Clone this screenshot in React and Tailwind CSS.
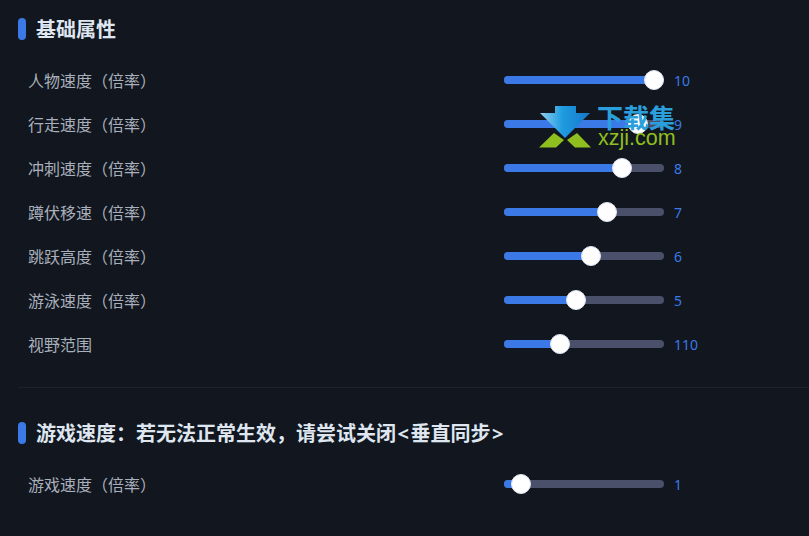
import React from 'react';

const basicRows = [
  { label: '人物速度（倍率）', value: 10, knob: 150 },
  { label: '行走速度（倍率）', value: 9, knob: 134 },
  { label: '冲刺速度（倍率）', value: 8, knob: 118 },
  { label: '蹲伏移速（倍率）', value: 7, knob: 103 },
  { label: '跳跃高度（倍率）', value: 6, knob: 87 },
  { label: '游泳速度（倍率）', value: 5, knob: 71.5 },
  { label: '视野范围', value: 110, knob: 56 },
];

const SliderRow = ({ label, value, knob }) => (
  <div className="flex h-11 items-center pl-[28px]">
    <div className="w-[476px] pt-[2px] text-base leading-6 text-[#a9b0bb]">{label}</div>
    <div className="relative h-2 w-40 rounded-full bg-[#4a4f6a]">
      <div className="h-2 rounded-full bg-[#3b7ae6]" style={{ width: knob }} />
      <div
        className="absolute top-1/2 h-5 w-5 -translate-x-1/2 -translate-y-1/2 rounded-full border border-[#dfe6f0] bg-white"
        style={{ left: knob }}
      />
    </div>
    <div className="ml-[10px] pt-[2px] text-sm leading-5 text-[#3b7ae6]">{value}</div>
  </div>
);

const SectionTitle = ({ children }) => (
  <div className="flex h-[22px] items-center gap-[10px] pl-[18px]">
    <div className="h-[22px] w-2 rounded bg-[#3b7ae6]" />
    <h2 className="pt-[2px] text-xl font-bold leading-[22px] text-[#dfe6f0]">{children}</h2>
  </div>
);

// xzji watermark stamped over the second row
const Watermark = () => (
  <div className="absolute left-[539px] top-[104px] h-[46px] w-[140px]">
    <svg className="absolute left-0 top-0" width="54" height="46" viewBox="539 104 54 46">
      <defs>
        <linearGradient id="arrowFill" x1="0" y1="0" x2="1" y2="0">
          <stop offset="0" stopColor="#8fd0f0" />
          <stop offset="0.45" stopColor="#1f9be0" />
          <stop offset="1" stopColor="#1578c8" />
        </linearGradient>
      </defs>
      <path d="M555 106h21v7h14l-25 25-25-25h15z" fill="url(#arrowFill)" />
      <path d="M539 147.500l15-14.500 10 7-8 7.500z" fill="#8fbf1f" />
      <path d="M567 140l10-7 14 14.500h-16z" fill="#8fbf1f" />
    </svg>
    <div className="absolute left-[58px] top-[1px] text-[26px] font-bold leading-[26px] text-[#2a9fdc]">
      下载集
    </div>
    <div
      className="absolute left-[59px] top-[22px] text-[21.500px] leading-6 text-[#8fbf1f]"
      style={{ fontFamily: '"Liberation Sans", sans-serif' }}
    >
      xzji.com
    </div>
  </div>
);

export default function App() {
  return (
    <div
      className="relative h-[536px] w-[809px] overflow-hidden bg-[#11161f] pt-[18px]"
      style={{ fontFamily: '"Noto Sans", "Noto Sans CJK SC", sans-serif' }}
    >
      <SectionTitle>基础属性</SectionTitle>
      <div className="mt-[18px]">
        {basicRows.map((row) => (
          <SliderRow key={row.label} {...row} />
        ))}
      </div>
      <div className="ml-[18px] mt-[21px] border-t border-[#1e2329]" />
      <div className="mt-[34px]">
        <SectionTitle>
          游戏速度：若无法正常生效，请尝试关闭
          <span className="mx-[1.500px]">&lt;</span>
          垂直同步
          <span className="mx-[1.500px]">&gt;</span>
        </SectionTitle>
      </div>
      <div className="mt-[18px]">
        <SliderRow label="游戏速度（倍率）" value={1} knob={16.5} />
      </div>
      <Watermark />
    </div>
  );
}
